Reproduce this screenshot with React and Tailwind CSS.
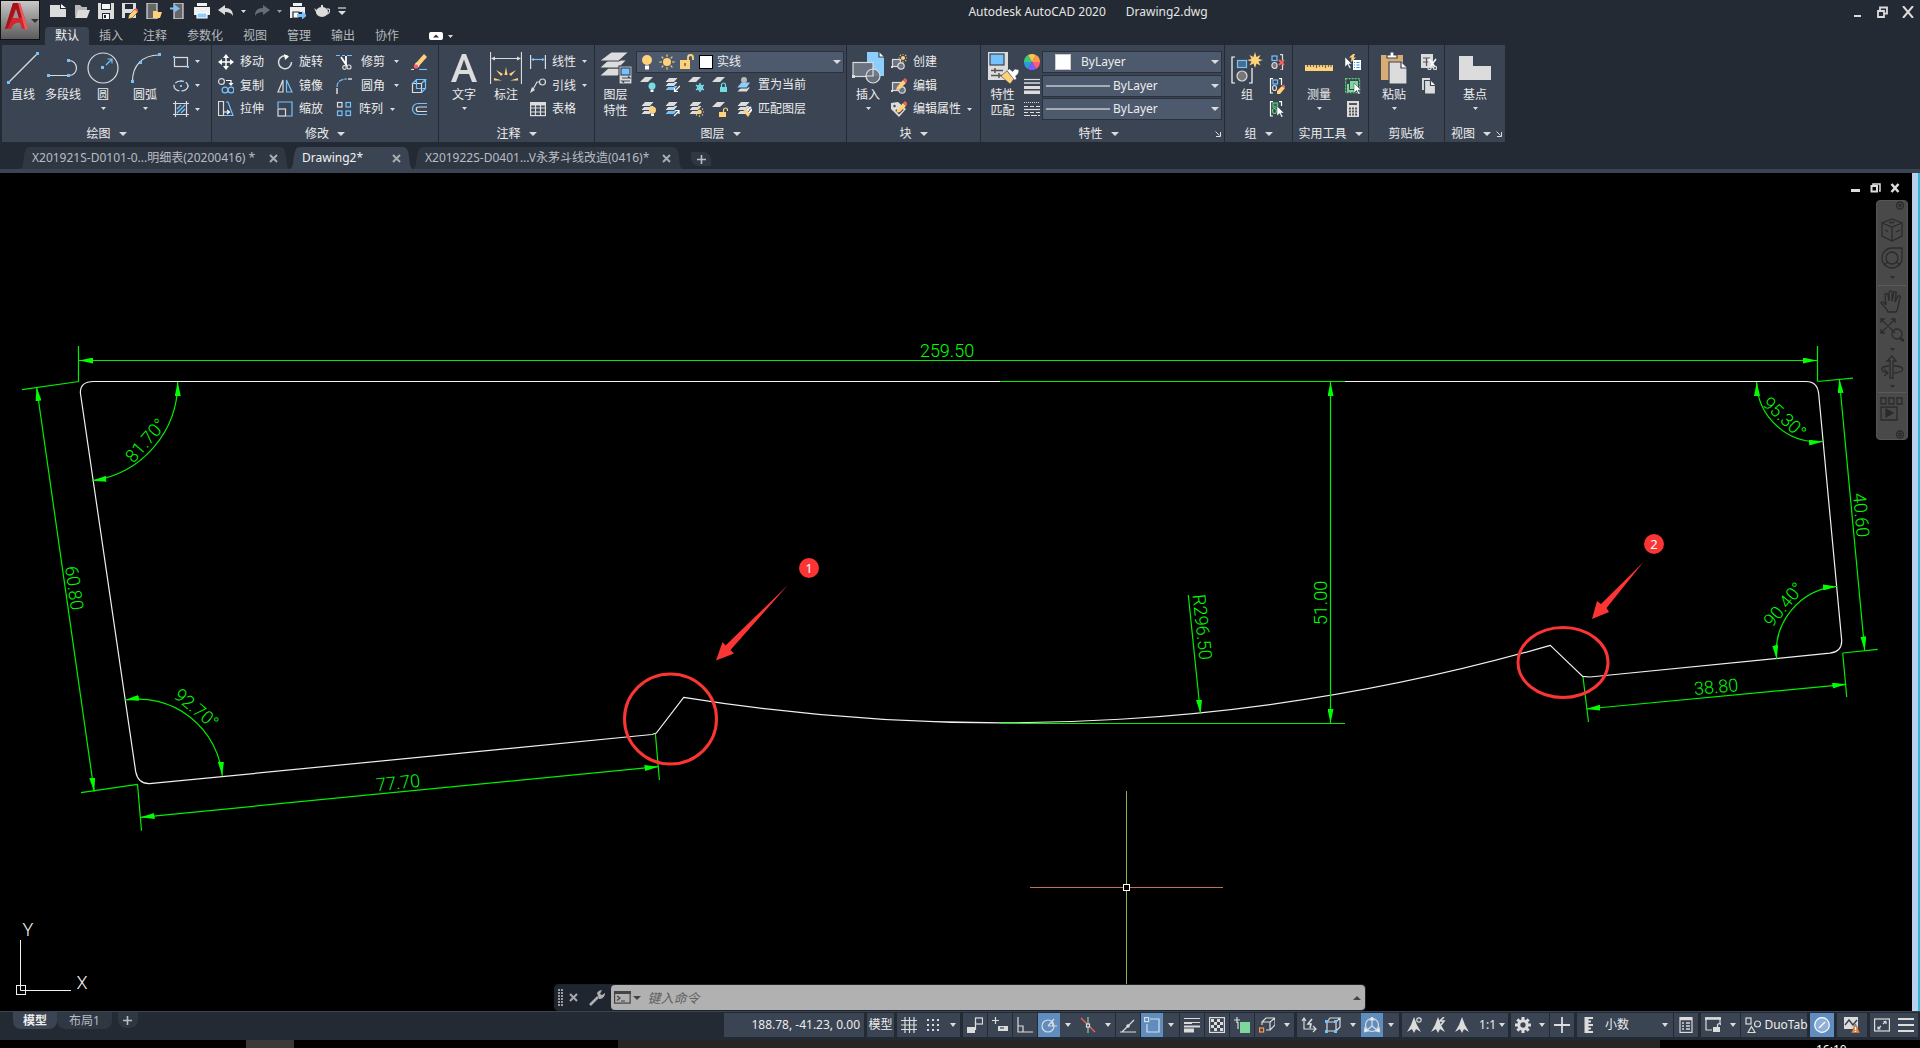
import React from "react";

const W = "#dcdcdc";
const B = "#74c3ff";
const Y = "#ffd27a";
const C = "#74dce6";
const R = "#ff5c5c";
const G = "#7fd89b";
const P = "#3b4453";

/* ---------- drawing helpers for icons ---------- */
function Ico({ w = 16, h = w, children, className = "" }) {
  return (
    <svg width={w} height={h} viewBox={`0 0 ${w} ${h}`} fill="none" stroke={W} strokeWidth="1.2" className={`shrink-0 ${className}`} aria-hidden="true">
      {children}
    </svg>
  );
}
const Dot = ({ x, y, s = 3, c = B }) => <rect x={x} y={y} width={s} height={s} fill={c} stroke="none" />;
const Caret = ({ className = "text-[#dcdcdc]", big }) => (
  <svg width={big ? 8 : 5} height={big ? 4 : 3} viewBox="0 0 8 4" className={`shrink-0 ${className}`} preserveAspectRatio="none" aria-hidden="true">
    <path d="M0 0h8L4 4z" fill="currentColor" />
  </svg>
);
const Sheet = ({ x = 0, y = 0, c = W }) => <path d={`M${x + 5} ${y}h8l-5 5h-8z`} fill={c} stroke="none" />;
const Stack = ({ c1 = W, c2 = W, c3 = W }) => (
  <g stroke={P} strokeWidth="1">
    <path d="M5 8.500h9.500l-4.500 5h-9.500z" fill={c3} />
    <path d="M5 4.500h9.500l-4.500 5h-9.500z" fill={c2} />
    <path d="M5 0.500h9.500l-4.500 5h-9.500z" fill={c1} />
  </g>
);
const Bulb = ({ x, y, c = Y }) => (
  <g stroke="none">
    <circle cx={x} cy={y} r="3.500" fill={c} />
    <rect x={x - 1.5} y={y + 3.5} width="3" height="2.500" fill="#fff" />
  </g>
);
const Lock = ({ x, y, c, open }) => (
  <g>
    <rect x={x} y={y} width="7" height="5" fill={c} stroke="none" />
    <path d={open ? `M${x + 4.5} ${y}v-2a2 2 0 0 1 4 0v1` : `M${x + 1.5} ${y}v-2a2 2 0 0 1 4 0v2`} stroke={c} />
  </g>
);
const Sun = ({ x, y, r = 3, c = Y }) => (
  <g stroke={c}>
    <circle cx={x} cy={y} r={r} fill={c} stroke="none" />
    {[0, 45, 90, 135, 180, 225, 270, 315].map((a) => (
      <path key={a} d={`M${x + r + 1.2} ${y}h${r * 0.6}`} transform={`rotate(${a} ${x} ${y})`} />
    ))}
  </g>
);
const Pencil = () => (
  <g stroke="none">
    <path d="M6 9l6-7 3 3-6 6-4 1z" fill={Y} />
    <path d="M12 2l2-2 2.500 2.500L15 5z" fill={R} />
  </g>
);
const Cursor = ({ x, y }) => <path d={`M${x} ${y}v10l2.500-2.500 2 4 1.500-.8-2-3.700h3z`} fill="#fff" stroke={P} strokeWidth=".5" />;

/* ---------- large ribbon icons ---------- */
const Big = {
  line: <Ico w={32}><path d="M2 30L30 2" /><Dot x={0} y={29} /><Dot x={29} y={0} /></Ico>,
  pline: <Ico w={32}><path d="M2 23.500h20M22 23.500a7 7 0 0 0 0-15" /><Dot x={0} y={22} /><Dot x={20} y={22} /><Dot x={20} y={7} /></Ico>,
  circle: <Ico w={32}><circle cx="16" cy="16" r="15" /><Dot x={14} y={14} /><path d="M19 13l6-6M20.500 7H25v4.500" stroke={B} /></Ico>,
  arc: <Ico w={32}><path d="M3.500 29C3.500 14 13 3 30 3" /><Dot x={2} y={28} /><Dot x={10} y={9} /><Dot x={29} y={1} /></Ico>,
  text: <Ico w={32}><path d="M3 30L14 2h4l11 28h-5l-3-8H11l-3 8zM12.300 18h7.400L16 7.500z" fill={W} stroke="none" /></Ico>,
  dim: (
    <Ico w={32}>
      <path d="M.5 0v32M31.500 0v32M2 6.500h28" />
      <path d="M1 6.500l4-2v4zM31 6.500l-4-2v4z" fill={W} stroke="none" />
      <path d="M14.500 23L16 15l1.500 8zM11 24l-5-6 7 4zM21 24l5-6-7 4zM4 28.500v-2.500l8 2.500zM28 28.500v-2.500l-8 2.500z" fill={Y} stroke="none" />
    </Ico>
  ),
  layers: (
    <Ico w={32}>
      <g fill={W} stroke={P}><path d="M8 16h18l-8 8H-1z" /><path d="M8 8h19l-8 8H-1z" /><path d="M11 0h18l-10 9H-1z" /></g>
      <rect x="19" y="14" width="13" height="18" fill={W} stroke={P} /><rect x="21" y="16" width="9" height="7" fill={B} stroke={P} />
      <path d="M22 26h8l-2-1.500M30 29h-8l2 1.500" stroke={P} />
    </Ico>
  ),
  insert: (
    <Ico w={32}>
      <path d="M15 0h11l6 6v18H15z" fill="#8ccfff" stroke="none" /><path d="M27 0v5h5" fill="#fff" stroke={P} />
      <rect x="1" y="10.500" width="20" height="14" fill="#6b7280" /><Dot x={0} y={23} c={W} /><circle cx="21" cy="24" r="7" fill="#6b7280" fillOpacity=".9" />
      <path d="M21 16v8h-8" />
    </Ico>
  ),
  match: (
    <Ico w={32}>
      <rect x="1" y="0" width="20" height="28" fill={W} stroke="none" /><rect x="3" y="2" width="14" height="11" fill={B} stroke={P} />
      <path d="M4 18.500h12M4 23.500h12M8 16v5M12 21v5" stroke="#555" strokeWidth="1.500" />
      <path d="M14 24l6-5 7 8-4 5z" fill={Y} stroke={P} strokeWidth=".6" />
      <path d="M20 18.500l2.500-1.500 3 2.500L28 17l4 1-1 4-2.500 2 1 3-2 1z" fill="#fff" stroke={P} strokeWidth=".4" />
    </Ico>
  ),
  group: (
    <Ico w={32}>
      <path d="M4 5H1v26h3M18 31h3V16" stroke="#fff" />
      <rect x="6.500" y="8.500" width="9" height="7" fill="#4a6c8c" stroke={B} /><circle cx="11" cy="24" r="5" fill="#777" />
      <path d="M24 0l1.500 5 4-2-2 4 4.500 1-4.500 1.500 2 4-4-2L24 16l-1.500-4.500-4 2 2-4L16 8l4.500-1-2-4 4 2z" fill={Y} stroke="none" />
    </Ico>
  ),
  ruler: <Ico w={32}><rect x="2" y="13" width="28" height="6" fill={Y} stroke="none" /><path d="M4.500 13v2M7.500 13v2M10.500 13v2M13.500 13v3M16.500 13v2M19.500 13v2M22.500 13v3M25.500 13v2M28 13v2" stroke="#665" /></Ico>,
  paste: (
    <Ico w={32}>
      <rect x="3" y="3" width="22" height="25" fill="#d9ac73" stroke="none" /><path d="M9 3h3V0h4v3h3v3H9z" fill="#fff" stroke={P} />
      <path d="M11 10h12l6 6v16H11z" fill={W} stroke={P} /><path d="M23 10v6h6" fill="#fff" stroke={P} />
    </Ico>
  ),
  base: <Ico w={32}><path d="M0 4h14v10h18v14H0z" fill={W} stroke="none" /></Ico>,
};

/* ---------- small ribbon icons ---------- */
const Sm = {
  rect: <Ico><rect x="1.500" y="3.500" width="13" height="9" /><Dot x={0} y={2} s={2} /><Dot x={14} y={12} s={2} /></Ico>,
  ellipse: <Ico><ellipse cx="8" cy="8" rx="7" ry="5" strokeDasharray="9 2" /><Dot x={7} y={7} s={2} /><Dot x={14} y={7} s={2} /><Dot x={7} y={2} s={2} /></Ico>,
  hatch: <Ico><path d="M2.500 0v16M13.500 0v16M0 2.500h16M0 13.500h16" /><path d="M4 8l4-4M4 12l8-8M8 12l4-4" stroke={B} strokeWidth="1.400" /></Ico>,
  move: <Ico><path d="M8 2v12M2 8h12" stroke="#fff" strokeWidth="1.500" /><path d="M8 0l3 4H5zM8 16l3-4H5zM0 8l4-3v6zM16 8l-4-3v6z" fill="#fff" stroke="none" /></Ico>,
  rotate: <Ico><path d="M11 2.500A6.500 6.500 0 1 0 14.500 8" strokeWidth="1.500" /><path d="M7 0l5 2.500L8 6z" fill="#fff" stroke="none" /></Ico>,
  trim: <Ico><path d="M0 1.500h4M6 1.500h3M11 1.500h5" stroke={B} /><path d="M5 3l6 9M10 2v9" stroke="#fff" strokeWidth="1.800" /><circle cx="13" cy="13" r="2" /><circle cx="8.500" cy="13.500" r="1.800" /></Ico>,
  erase: <Ico><path d="M5 9l8-9 3 3-8 9z" fill={Y} stroke="none" /><path d="M5 8.500L8.500 12 6.500 14 3.500 11z" fill="#fff" stroke="none" /><circle cx="5" cy="12.500" r="2.200" fill={R} stroke="none" /><path d="M0 15.500h3" /><path d="M8 15.500h8" stroke={B} /></Ico>,
  copy: <Ico><circle cx="3.500" cy="3.500" r="2.900" /><circle cx="7" cy="12" r="2.900" stroke={B} /><circle cx="13" cy="12" r="2.900" stroke={B} /><path d="M8 2.500h5V6" stroke="#fff" /><path d="M10.500 5h5L13 8z" fill="#fff" stroke="none" /></Ico>,
  mirror: <Ico><path d="M6 2v12H1z" /><path d="M9.500 2v12H15z" stroke={B} /></Ico>,
  fillet: <Ico><path d="M1 16v-6M12 1h4" strokeWidth="1.500" /><path d="M1 9c0-5 3-8 10-8" stroke={B} strokeDasharray="5 1" /></Ico>,
  box: <Ico><path d="M1.500 5.500h9v9h-9z" /><path d="M1.500 5.500l4-4h9l-4 4M14.500 1.500v9l-4 4M5.500 1.500v9h9" stroke={B} /></Ico>,
  stretch: <Ico><path d="M.5.500h5v14h-5z" /><path d="M8 1h2l5 13.500H6" stroke={B} /><path d="M5 11h6M9 9l2.500 2L9 13" stroke="#fff" /></Ico>,
  scale: <Ico><path d="M1 7V1h14v14H9" stroke={B} /><rect x="1" y="8" width="7.500" height="7" /></Ico>,
  array: <Ico><rect x="1.500" y="1.500" width="4.500" height="4.500" /><g stroke={B}><rect x="10" y="1.500" width="4.500" height="4.500" /><rect x="1.500" y="10" width="4.500" height="4.500" /><rect x="10" y="10" width="4.500" height="4.500" /></g></Ico>,
  offset: <Ico><path d="M16 2.500H7a5.500 5.500 0 0 0 0 11h9" stroke={B} /><path d="M16 6H7.500a2.200 2.200 0 0 0 0 4.500H16" /></Ico>,
  linear: <Ico><path d="M.6 1v14M15.400 1v14" /><path d="M2 5.500h12" stroke={B} /><path d="M1 5.500L4 4v3zM15 5.500L12 4v3z" fill={B} stroke="none" /></Ico>,
  leader: <Ico><circle cx="12.500" cy="4" r="3" /><path d="M9.500 4H7L2 13" /><path d="M0 15l2-6 3 3z" fill={W} stroke="none" /></Ico>,
  table: <Ico><rect x=".6" y="1.600" width="14.800" height="13" /><path d="M0 3h16" strokeWidth="3" /><path d="M0 7h16M0 11h16M5.500 4v11M10.500 4v11" /></Ico>,
  lOff: <Ico><Sheet /><Bulb x={12} y={9} c={C} /></Ico>,
  lIso: <Ico><Stack c3={B} /><path d="M16 9l-5 5M10.500 11v3.500H14" stroke="#fff" /></Ico>,
  lFrz: <Ico><Sheet /><path d="M12 6v9M8 8.200l8 4.600M16 8.200l-8 4.600" stroke={C} strokeWidth="1.500" /><circle cx="12" cy="10.500" r="2.500" stroke={C} /></Ico>,
  lLock: <Ico><Sheet /><Lock x={8} y={10} c={C} /></Ico>,
  lCur: <Ico><g stroke={P}><path d="M5 10h10l-4 5H0z" fill={W} /><path d="M5 5h10l-4 6H0z" fill="#8ccfff" /></g><circle cx="8" cy="3" r="3" fill="#b8b8b8" stroke="none" /></Ico>,
  lOn: <Ico><Stack /><Bulb x={12.5} y={9} /></Ico>,
  lUniso: <Ico><Stack c3={B} /><path d="M10 15l5-5M11.500 9.500H15V13" stroke="#fff" /></Ico>,
  lThaw: <Ico><Stack /><Sun x={11.5} y={11} r={2.3} /></Ico>,
  lUnlock: <Ico><Sheet y={1} /><Lock x={7} y={11} c={Y} open /></Ico>,
  lMatch: <Ico><Stack /><path d="M7 10l3-2 4 5-2 3z" fill={Y} stroke="none" /><path d="M11 9l4-3M13 12l3-4" stroke="#fff" strokeWidth="2" /></Ico>,
  create: <Ico><rect x="1.500" y="5.500" width="8" height="7" fill="#6b7280" /><circle cx="10" cy="12" r="3.200" fill="#6b7280" /><Dot x={0} y={12} s={2} c={W} /><Sun x={12} y={4} r={2} /></Ico>,
  edit: <Ico><rect x="1.500" y="4.500" width="8" height="8" fill="#6b7280" /><circle cx="11" cy="12" r="3.200" fill="#6b7280" /><Dot x={0} y={12} s={2} c={W} /><Pencil /></Ico>,
  attr: <Ico><path d="M0 2l7-1 8 7-7 8-8-8z" fill={W} stroke="none" /><circle cx="3.500" cy="5" r="1.200" fill={P} stroke="none" /><path d="M5 9l3 3 4-4" stroke={P} strokeWidth="2" /><Pencil /></Ico>,
  wheel: (
    <Ico>
      {["#ff9a4d", "#ff5c7a", "#7a5cff", "#2e9bd6", "#3cc77e", "#f5c84c"].map((c, i) => (
        <path key={c} d="M8 8L8 0A8 8 0 0 1 14.930 4z" fill={c} stroke="none" transform={`rotate(${i * 60 + 30} 8 8)`} />
      ))}
    </Ico>
  ),
  weights: <Ico><path d="M0 1.500h16" /><path d="M0 5h16" strokeWidth="1.500" /><path d="M0 9.500h16" strokeWidth="3" /><path d="M0 14.500h16" strokeWidth="4" /></Ico>,
  types: <Ico><path d="M0 1.500h16" strokeDasharray="1 1" /><path d="M0 5.500h16" strokeDasharray="4 2" /><path d="M0 8.500h16" /><path d="M0 11.500h16" strokeDasharray="4 2" /><path d="M0 14.500h16" strokeDasharray="6 1" /></Ico>,
  ungroup: <Ico><path d="M11 .600h2.500V16H11" /><rect x="3" y="2" width="5" height="4.500" stroke={B} /><ellipse cx="5.500" cy="11.500" rx="2.600" ry="3" fill="#777" /><path d="M10 6l5 5M15 6l-5 5" stroke={R} strokeWidth="1.800" /></Ico>,
  gedit: <Ico><path d="M4 .6H1.500V15H4M10 .6h2.500V7" stroke="#fff" /><rect x="4" y="2" width="4.500" height="4" stroke={B} /><ellipse cx="5.500" cy="10" rx="2" ry="2.500" /><path d="M8 13l5-5 3 2-5 6H8z" fill={Y} stroke="none" /><path d="M13 8l1.500-1.500L17 9l-1.500 1.500z" fill={R} stroke="none" /></Ico>,
  gsel: <Ico><path d="M4 .6H1.500V15H4M10 .6h2.500V5" stroke="#fff" /><rect x="4" y="2" width="4.500" height="4" stroke="#5ecb7d" fill="#2f6e47" /><ellipse cx="5.500" cy="10" rx="2" ry="2.500" stroke="#5ecb7d" /><Cursor x={8} y={5} /></Ico>,
  quick: <Ico><rect x="8" y="6" width="8" height="10" fill="#fff" stroke="none" /><path d="M11.500 8.500h3M11.500 11h3M11.500 13.500h3M9 8.500h1M9 11h1M9 13.500h1" stroke="#2e8fe0" /><Cursor x={0} y={3} /><path d="M8 0L4 3.500h2.500L6 8l5-4.500H8.500L10 0z" fill={Y} stroke="none" /></Ico>,
  selall: <Ico><rect x=".6" y=".6" width="14" height="14" stroke="#5ecb7d" strokeDasharray="2 1" /><rect x="5" y="3" width="8" height="8" fill={G} stroke="none" /><path d="M3 6v7h7" stroke={G} strokeWidth="2" /><Cursor x={9} y={5} /></Ico>,
  calc: <Ico><rect x="2" y="0" width="12" height="16" fill={W} stroke="none" /><path d="M4 3h8" stroke="#555" strokeWidth="2" /><path d="M4 7.500h8M4 10.500h8M4 13.500h8" stroke="#555" strokeWidth="1.800" strokeDasharray="2 1" /></Ico>,
  cut: <Ico><rect x="0" y="0" width="12" height="14" fill={W} stroke="none" /><path d="M2 4h7M2 8h5M5.500 4v8" stroke="#555" /><path d="M8 5l6 8M15 5l-6 8" stroke="#fff" strokeWidth="1.500" /><circle cx="8.500" cy="14" r="1.600" /><circle cx="14" cy="14" r="1.600" /></Ico>,
  copyc: <Ico><path d="M1 0h8v12H1z" fill={W} stroke="none" /><path d="M3.500 2.500h6l5 5v8.500h-11z" fill={W} stroke={P} /><path d="M9.500 2.500v5h5" fill="#fff" stroke={P} /></Ico>,
};

/* ---------- ribbon building blocks ---------- */
function Panel({ title, className, caret = true, launcher, children }) {
  return (
    <section aria-label={title} className={`flex shrink-0 flex-col bg-[#3b4453] ${className}`}>
      <div className="flex h-[76px] pt-[5px]">{children}</div>
      <div className="relative flex h-[21px] items-center justify-center pt-1 leading-4">
        <span className={`flex items-center gap-2 whitespace-nowrap ${launcher ? "pr-2" : ""}`}>
          <span>{title}</span>
          {caret && <Caret big />}
        </span>
        {launcher && (
          <button aria-label={`${title}设置`} className="absolute right-[3px] bottom-[5px]">
            <svg width="6" height="6" viewBox="0 0 6 6" fill="none" stroke={W}><path d="M.5.500l4 4M5.500 1v4.500H1" /></svg>
          </button>
        )}
      </div>
    </section>
  );
}
function BigBtn({ icon, label, label2, caret, className = "w-10" }) {
  return (
    <button className={`flex shrink-0 flex-col items-center pt-[2px] ${className}`}>
      {icon}
      <span className="pt-[3px] leading-4">{label}</span>
      {label2 && <span className="leading-4">{label2}</span>}
      {caret && <Caret className="mt-1 text-[#dcdcdc]" />}
    </button>
  );
}
function Row({ icon, label, caret, className = "" }) {
  return (
    <button aria-label={label ? undefined : "工具"} className={`flex h-6 items-center gap-[6px] whitespace-nowrap ${className}`}>
      {icon}
      {label && <span>{label}</span>}
      {caret && <Caret />}
    </button>
  );
}
const Col = ({ className = "", children }) => <div className={`flex shrink-0 flex-col ${className}`}>{children}</div>;

function Picker({ label, value, lead, className = "", selectClass = "" }) {
  return (
    <div className={`flex h-[22px] items-center border border-[#2a313c] bg-[#4d5a6e] pr-[2px] ${className}`}>
      {lead}
      <select aria-label={label} className={`min-w-0 flex-1 appearance-none bg-transparent leading-5 outline-none ${selectClass}`}>
        <option>{value}</option>
      </select>
      <Caret big />
    </div>
  );
}

/* ---------- header ---------- */
const qat = [
  ["新建", <Ico key="i"><path d="M0 2h10v4h6v8H0z" fill={W} stroke="none" /><path d="M11 1l5 4h-5z" fill="#fff" stroke="none" /></Ico>],
  ["打开", <Ico key="i"><path d="M1 14V2h5l2 2h5v3H5z" fill="#b8b8b8" stroke="none" /><path d="M4 7h12l-3 8H1z" fill={W} stroke="none" /></Ico>],
  ["保存", <Ico key="i"><path d="M0 0h16v16H0z" fill={W} stroke="none" /><path d="M3 0h10v7H3zM4 10h8v6H4z" fill="#232a33" stroke="none" /><path d="M4 1h8v5H4zM5 11h6v5H5z" fill="#f5f5f5" stroke="none" /><path d="M6 12h2v3H6z" fill="#232a33" stroke="none" /></Ico>],
  ["另存为", <Ico key="i"><path d="M0 0h14v15H0z" fill={W} stroke="none" /><path d="M3 1h8v5H3zM3 10h7v5H3z" fill="#232a33" stroke="none" /><path d="M7 12l6-6 3 3-6 6-4 1z" fill={Y} stroke="#232a33" strokeWidth=".5" /><path d="M12.500 6.500L14 5l3 3-1.500 1.500z" fill={R} stroke="none" /></Ico>],
  ["从移动设备打开", <Ico key="i"><rect x="1" y="0" width="10" height="16" fill="#666" stroke={W} /><path d="M7 8h4l1 1h4l-2 6H7z" fill={Y} stroke="none" /></Ico>],
  ["保存到移动设备", <Ico key="i"><rect x="4" y="0" width="9" height="16" fill="#666" stroke={W} /><path d="M0 5.500h6" stroke={B} strokeWidth="2" /><path d="M5 2l5 3.500L5 9z" fill={B} stroke="none" /></Ico>],
  ["打印", <Ico key="i"><path d="M3 0h10v3H3zM0 4h16v8h-3v-2H3v2H0z" fill="#f0f0f0" stroke="none" /><path d="M3 10h10v5H3z" fill="#8ccfff" stroke="#fff" /></Ico>],
];
const menus = ["默认", "插入", "注释", "参数化", "视图", "管理", "输出", "协作"];

function Header() {
  return (
    <header className="flex h-[45px]">
      <button aria-label="应用程序菜单" className="flex h-10 w-10 shrink-0 items-start gap-[3px] border border-[#111] bg-linear-to-b from-[#c8c8c8] to-[#5c5c5c] pt-[2px] pl-1">
        <svg width="23" height="27" viewBox="0 0 23 27">
          <path d="M0 26L8 0h7l8 26h-6l-2-6c-4-1-8 2-9 6z" fill="#d3262e" />
          <path d="M11 6l3 9H8z" fill="#999" />
          <path d="M8 0L0 26l3-1L11 5l3 10 3-1L13 0z" fill="#a3151c" />
          <path d="M13 0h2l8 26h-3z" fill="#ef5a5a" />
        </svg>
        <Caret big className="mt-4 text-[#333]" />
      </button>
      <div className="flex min-w-0 flex-1 flex-col">
        <div className="grid h-[27px] grid-cols-[1fr_auto_1fr] items-start">
          <div className="flex h-[22px] items-center gap-2 pl-[10px]">
            {qat.map(([n, i]) => <button key={n} aria-label={n}>{i}</button>)}
            <button aria-label="放弃" className="flex items-center gap-[7px]">
              <Ico><path d="M0 7l7-5v3c6 0 8 3 8 8-2-3-4-4-8-4v3z" fill={W} stroke="none" /></Ico><Caret />
            </button>
            <button aria-label="重做" className="flex items-center gap-[7px]">
              <Ico><path d="M16 7L9 2v3c-6 0-8 3-8 8 2-3 4-4 8-4v3z" fill="#666d76" stroke="none" /></Ico><Caret className="text-[#9a9fa6]" />
            </button>
            <button aria-label="批处理打印"><Ico><path d="M3 0h9v3H3zM0 4h15v7h-3V9H3v6H0z" fill="#f0f0f0" stroke="none" /><path d="M3 9h6v6H3z" fill="#fff" stroke="#232a33" /><path d="M7 11h5V8l5 4.500-5 4V14H7z" fill={B} stroke="none" /></Ico></button>
            <button aria-label="渲染"><Ico><ellipse cx="8" cy="9" rx="6" ry="5" fill={W} stroke="none" /><path d="M0 5l4 3-1 3zM7 2h2v3H7z" fill={W} stroke="none" /><path d="M13 6c4-1 3 4 0 5" /></Ico></button>
            <button aria-label="自定义快速访问工具栏"><Ico w={8} h={8}><path d="M0 1h8" /><path d="M0 4h8L4 8z" fill={W} stroke="none" /></Ico></button>
          </div>
          <h1 className="flex h-6 items-center gap-5 pl-[216px] text-[#e6e6e6]"><span>Autodesk AutoCAD 2020</span><span>Drawing2.dwg</span></h1>
          <div className="flex h-6 items-center justify-end gap-[14px] pr-[6px]">
            <button aria-label="最小化"><Ico w={10} h={12}><path d="M1 10h7" strokeWidth="2" /></Ico></button>
            <button aria-label="还原"><Ico w={11} h={12}><path d="M3 4V1.500h7v6H8" strokeWidth="1.800" /><path d="M1 5h6v6H1z" strokeWidth="1.800" /></Ico></button>
            <button aria-label="关闭"><Ico w={12} h={12}><path d="M1 0l10 12M11 0L1 12" strokeWidth="2" /></Ico></button>
          </div>
        </div>
        <nav className="flex h-[18px] items-stretch pl-[5px]">
          {menus.map((m, i) => (
            <button key={m} className={i === 0 ? "rounded-t-sm bg-[#3b4453] px-[10px] leading-[18px] text-[#f2f2f2]" : "px-[10px] leading-[18px] text-[#b4b8be]"}>{m}</button>
          ))}
          <button aria-label="最小化功能区" className="ml-5 flex items-center gap-[5px]">
            <Ico w={14} h={8}><rect width="14" height="8" rx="2" fill="#fff" stroke="none" /><path d="M4 5.500h6L7 2.500z" fill="#333" stroke="none" /></Ico>
            <Caret />
          </button>
        </nav>
      </div>
    </header>
  );
}

/* ---------- ribbon ---------- */
const lineSample = <svg width="64" height="2" className="mx-[3px] shrink-0"><path d="M0 1h64" stroke="#fff" /></svg>;

function Ribbon() {
  return (
    <div className="flex gap-px pb-[5px] pl-[2px] text-[#ececec]">
      <Panel title="绘图" className="w-[209px]">
        <BigBtn icon={Big.line} label="直线" className="ml-[1px] w-10" />
        <BigBtn icon={Big.pline} label="多段线" />
        <BigBtn icon={Big.circle} label="圆" caret />
        <BigBtn icon={Big.arc} label="圆弧" caret className="w-11" />
        <Col className="pl-[6px]">
          <Row icon={Sm.rect} caret /><Row icon={Sm.ellipse} caret /><Row icon={Sm.hatch} caret />
        </Col>
      </Panel>
      <Panel title="修改" className="w-[226px]">
        <Col className="w-[65px] pl-[6px]"><Row icon={Sm.move} label="移动" /><Row icon={Sm.copy} label="复制" /><Row icon={Sm.stretch} label="拉伸" /></Col>
        <Col className="w-[59px]"><Row icon={Sm.rotate} label="旋转" /><Row icon={Sm.mirror} label="镜像" /><Row icon={Sm.scale} label="缩放" /></Col>
        <Col className="w-[75px]"><Row icon={Sm.trim} label="修剪" caret className="justify-between pr-3" /><Row icon={Sm.fillet} label="圆角" caret className="justify-between pr-3" /><Row icon={Sm.array} label="阵列" caret className="justify-between pr-4" /></Col>
        <Col><Row icon={Sm.erase} /><Row icon={Sm.box} /><Row icon={Sm.offset} /></Col>
      </Panel>
      <Panel title="注释" className="w-[155px]">
        <BigBtn icon={Big.text} label="文字" caret className="ml-[3px] w-11" />
        <BigBtn icon={Big.dim} label="标注" />
        <Col className="gap-0 pl-1"><Row icon={Sm.linear} label="线性" caret /><Row icon={Sm.leader} label="引线" caret /><Row icon={Sm.table} label="表格" /></Col>
      </Panel>
      <Panel title="图层" className="w-[251px]">
        <BigBtn icon={Big.layers} label="图层" label2="特性" className="w-[41px]" />
        <Col className="flex-1 pr-[2px]">
          <div className="flex h-6 items-center">
            <Picker label="图层" value="实线" className="flex-1 pl-[2px]" selectClass="pl-1" lead={
              <span className="flex items-center gap-1">
                <Ico><circle cx="8" cy="6" r="5" fill={Y} stroke="none" /><path d="M8 11.500v4" stroke="#fff" strokeWidth="4" /></Ico>
                <Ico><Sun x={8} y={8} r={4} /></Ico>
                <Ico><rect x="1" y="6" width="10" height="9" fill={Y} stroke="none" /><path d="M9 6V3.500a2.500 2.500 0 0 1 5 0V6" stroke={Y} strokeWidth="1.800" /><path d="M6 9v3" stroke={P} /></Ico>
                <span className="block size-[14px] border border-black bg-white" />
              </span>} />
          </div>
          <div className="flex h-6 items-center gap-2 pl-1">{[Sm.lOff, Sm.lIso, Sm.lFrz, Sm.lLock].map((x, i) => <button key={i} aria-label="图层工具">{x}</button>)}<Row icon={Sm.lCur} label="置为当前" /></div>
          <div className="flex h-6 items-center gap-2 pl-1">{[Sm.lOn, Sm.lUniso, Sm.lThaw, Sm.lUnlock].map((x, i) => <button key={i} aria-label="图层工具">{x}</button>)}<Row icon={Sm.lMatch} label="匹配图层" /></div>
        </Col>
      </Panel>
      <Panel title="块" className="w-[133px]">
        <BigBtn icon={Big.insert} label="插入" caret className="w-[42px]" />
        <Col className="pl-[2px]"><Row icon={Sm.create} label="创建" /><Row icon={Sm.edit} label="编辑" /><Row icon={Sm.attr} label="编辑属性" caret /></Col>
      </Panel>
      <Panel title="特性" className="w-[243px]" launcher>
        <BigBtn icon={Big.match} label="特性" label2="匹配" className="w-[43px]" />
        <Col><Row icon={Sm.wheel} /><Row icon={Sm.weights} /><Row icon={Sm.types} /></Col>
        <Col className="flex-1 pr-[2px] pl-[2px]">
          <div className="flex h-6 items-center"><Picker className="flex-1" label="颜色" value="ByLayer" selectClass="pl-[10px]" lead={<span className="ml-3 block size-4 border border-[#ccc] bg-white" />} /></div>
          <div className="flex h-6 items-center"><Picker className="flex-1" label="线宽" value="ByLayer" lead={lineSample} /></div>
          <div className="flex h-6 items-center"><Picker className="flex-1" label="线型" value="ByLayer" lead={lineSample} /></div>
        </Col>
      </Panel>
      <Panel title="组" className="w-[67px]">
        <BigBtn icon={Big.group} label="组" className="w-11" />
        <Col><Row icon={Sm.ungroup} /><Row icon={Sm.gedit} /><Row icon={Sm.gsel} /></Col>
      </Panel>
      <Panel title="实用工具" className="w-[75px]">
        <BigBtn icon={Big.ruler} label="测量" caret className="w-[52px]" />
        <Col><Row icon={Sm.quick} /><Row icon={Sm.selall} /><Row icon={Sm.calc} /></Col>
      </Panel>
      <Panel title="剪贴板" className="w-[75px]" caret={false}>
        <BigBtn icon={Big.paste} label="粘贴" caret className="w-[50px]" />
        <Col className="pl-[2px]"><Row icon={Sm.cut} /><Row icon={Sm.copyc} /></Col>
      </Panel>
      <Panel title="视图" className="w-[60px]" launcher>
        <BigBtn icon={Big.base} label="基点" caret className="w-[60px]" />
      </Panel>
    </div>
  );
}

/* ---------- file tabs ---------- */
const Cross = ({ c = "#a8abb0" }) => <svg width="9" height="9" viewBox="0 0 9 9" aria-hidden="true"><path d="M1 1l7 7M8 1L1 8" stroke={c} strokeWidth="2" /></svg>;

function FileTab({ name, active, className }) {
  return (
    <div className={`flex items-stretch ${active ? "text-[#3b4453]" : "text-[#2f3743]"} ${className}`}>
      <svg width="10" height="22" viewBox="0 0 10 22" className="shrink-0"><path d="M0 22C6 20 1 0 10 0v22z" fill="currentColor" /></svg>
      <div className="flex min-w-0 flex-1 items-center justify-between bg-current">
        <button role="tab" aria-selected={!!active} className={active ? "pl-[2px] whitespace-nowrap text-[#f2f2f2]" : "pl-[2px] whitespace-nowrap text-[#b9bdc3]"}>{name}</button>
        <button aria-label="关闭标签" className="pr-[2px]"><Cross /></button>
      </div>
      <svg width="10" height="22" viewBox="0 0 10 22" className="shrink-0"><path d="M10 22C4 20 9 0 0 0v22z" fill="currentColor" /></svg>
    </div>
  );
}
function FileTabs() {
  return (
    <div role="tablist" className="flex h-[26px] items-stretch border-b-4 border-[#3b4453] pl-5">
      <FileTab name="X201921S-D0101-0...明细表(20200416) *" className="w-[270px]" />
      <FileTab name="Drawing2*" active className="w-[123px]" />
      <FileTab name="X201922S-D0401...V永茅斗线改造(0416)*" className="w-[270px]" />
      <button aria-label="新图形" className="mt-[5px] ml-2 flex h-[14px] w-5 items-center justify-center rounded-tr-lg rounded-bl-lg bg-[#2f3743]">
        <svg width="9" height="9" viewBox="0 0 9 9"><path d="M4.500 0v9M0 4.500h9" stroke="#b9bdc3" strokeWidth="1.600" /></svg>
      </button>
    </div>
  );
}

/* ---------- model space ---------- */
const dims = [
  { t: "259.50", x: 947, y: 350, r: 0 },
  { t: "60.80", x: 75, y: 588, r: 82 },
  { t: "81.70°", x: 145, y: 440, r: -49 },
  { t: "92.70°", x: 197, y: 708, r: 40 },
  { t: "77.70", x: 398, y: 782, r: -6 },
  { t: "51.00", x: 1320, y: 603, r: -90 },
  { t: "R296.50", x: 1203, y: 627, r: 84 },
  { t: "38.80", x: 1716, y: 686, r: -5 },
  { t: "40.60", x: 1862, y: 515, r: 85 },
  { t: "95.30°", x: 1785, y: 417, r: 43 },
  { t: "90.40°", x: 1783, y: 604, r: -50 },
];
const dimLines = [
  "M79 360.500H1817", "M36.600 387L94.200 791.700", "M140.600 817.300L658.500 766.700", "M1330.500 382V723",
  "M1586.300 709L1846.300 684.300", "M1839.300 379L1864.700 650.400",
  "M177.700 382A99 99 0 0 1 92.400 480.700", "M125 700A85 85 0 0 1 222.300 775.700",
  "M1756.700 382A61 61 0 0 0 1823 441.400", "M1776.700 659.300A66 66 0 0 1 1837 586.400",
];
const extLines = "M78.500 346V381M1817.500 346V381M22 389.700L79 381.500M81 792.700L137.500 784.300M137.500 784.300L141.500 830.700M655.400 734L659.400 780M1000 723.500H1345M1583 677L1588.500 722M1842.700 653L1846.700 697M1817.500 381.500L1853 378.200M1842.700 653L1877.700 649.300";

function Drawing() {
  return (
    <svg viewBox="0 173 1912 838" className="block w-full" fill="none" role="img" aria-label="Drawing2">
      <defs>
        <marker id="arrow" viewBox="0 0 14 6" refX="14" refY="3" markerWidth="14" markerHeight="6" markerUnits="userSpaceOnUse" orient="auto-start-reverse">
          <path d="M0 0L14 3L0 6z" fill="#00ff00" />
        </marker>
      </defs>
      <path stroke="#f0f0f0" strokeWidth="1.200" d="M93.700 381.500H1806Q1817.500 381.500 1818.700 394L1841.700 640.400Q1842 651.500 1830 653.200L1590 677L1582.700 676.400L1550.300 645.400A1987 1987 0 0 1 683.700 697.300L656.300 733L652 734.500L149.500 783.700Q138 784 135.700 771.700L80.400 393Q80 381.500 93.700 381.500Z" />
      <g stroke="#00ee00" strokeWidth="1.200">
        <path d={extLines} />
        <path d="M1000 381.500H1345" />
        {dimLines.map((d) => <path key={d} d={d} markerStart="url(#arrow)" markerEnd="url(#arrow)" />)}
        <path d="M1188.300 595L1200.500 713.700" markerEnd="url(#arrow)" />
      </g>
      <g fill="#00ff00" className="font-['Roboto','Lato',sans-serif] text-[18px] font-light">
        {dims.map((d) => (
          <text key={d.t} transform={`translate(${d.x} ${d.y}) rotate(${d.r})`} y="7" textAnchor="middle">{d.t}</text>
        ))}
      </g>
      <g stroke="#fa3534" strokeWidth="3">
        <ellipse cx="670.500" cy="719" rx="46" ry="45" />
        <ellipse cx="1563" cy="662.500" rx="45" ry="35" />
      </g>
      <g fill="#fa3534">
        <path d="M788 585L730.500 650L734 653.500L716 660.500L722.500 642L725.500 645.500Z" />
        <path d="M1643.500 562L1606.500 608L1609 612L1592 619L1597 601L1601 604Z" />
        <circle cx="809" cy="568" r="10" />
        <circle cx="1654" cy="544" r="10" />
      </g>
      <g fill="#fff" textAnchor="middle" className="text-[13px]">
        <text x="809" y="573">1</text>
        <text x="1654" y="549">2</text>
      </g>
      <path d="M1126.500 791V984" stroke="#8cb84a" />
      <path d="M1030 887.500H1223" stroke="#c0705a" />
      <rect x="1123.500" y="884.500" width="6" height="6" stroke="#fff" fill="#000" />
      <g stroke="#f0f0f0">
        <path d="M20.500 940V990.500H71" />
        <rect x="16.500" y="985.500" width="9" height="9" />
      </g>
      <g fill="#f8f8f8" textAnchor="middle" className="font-['Roboto','Lato',sans-serif] text-[18px] font-light">
        <text x="28" y="936">Y</text>
        <text x="82" y="989">X</text>
      </g>
    </svg>
  );
}

const NavIco = ({ h = 24, children }) => <svg width="24" height={h} viewBox={`0 0 24 ${h}`} fill="none" stroke="#2b2b2b" strokeWidth="1.300" aria-hidden="true">{children}</svg>;
const NavCaret = () => <Caret className="text-[#2b2b2b]" />;

function NavBar() {
  return (
    <div className="absolute top-[27px] right-1 flex h-60 w-8 flex-col items-center rounded border border-[#555] bg-[#494949]">
      <button aria-label="关闭导航栏" className="mr-[2px] self-end"><NavIco h={9}><circle cx="19" cy="4.500" r="3.500" /><path d="M17.500 3l3 3M20.500 3l-3 3" /></NavIco></button>
      <button aria-label="视图立方" className="mt-2"><NavIco><path d="M2 5l10-4 10 4v13l-10 5-10-5zM2 5l10 4 10-4M12 9v14M9 4.500h5M5 12l3 1.500M16 14l4-2" /></NavIco></button>
      <button aria-label="控制盘" className="mt-1 flex flex-col items-center gap-[6px]"><NavIco><path d="M12 2h10v10a10 10 0 1 1-10-10z" /><circle cx="12" cy="12" r="6" /><path d="M4 19l4-3M20 19l-4-3" /></NavIco><NavCaret /></button>
      <div className="mt-[6px] w-7 border-t border-[#5a5a5a]" />
      <button aria-label="平移" className="mt-1"><NavIco><path d="M8 22c-1-3-4-6-7-9 1-2 3-1 5 2L5 5c0-2 2-2 3 0l1 6V2c1-2 3-1 3 0v9l2-9c1-1 3 0 2 2l-1 8 3-6c1-1 3 0 2 2-2 6-1 10-4 14z" /></NavIco></button>
      <button aria-label="缩放" className="mt-1 flex flex-col items-center gap-[6px]"><NavIco><path d="M1 1l14 14M15 1L1 15M1 5V1h4M11 1h4v4M1 11v4h4" /><circle cx="17" cy="16" r="5" /><path d="M20 20l4 3" strokeWidth="2.500" /></NavIco><NavCaret /></button>
      <button aria-label="动态观察" className="mt-1 flex flex-col items-center gap-[6px]"><NavIco><path d="M10 23V6H7l5-5 4 5h-3v17z" /><path d="M8 18C-1 17 0 11 9 11M14 11c11 0 12 6 0 7M4 14l4 4-4 3" /></NavIco><NavCaret /></button>
      <div className="mt-1 w-7 border-t border-[#5a5a5a]" />
      <button aria-label="ShowMotion" className="mt-1"><NavIco><path d="M1 1h5v6H1zM9 1h5v6H9zM17 1h5v6h-5zM1 10h16v13H1z" /><path d="M6 12l7 4-7 4z" fill="#2b2b2b" /></NavIco></button>
      <button aria-label="导航栏选项" className="mt-auto mr-[2px] self-end"><NavIco h={9}><circle cx="19" cy="4.500" r="3.500" /><path d="M17 3.500h4M17 5.500h4" /></NavIco></button>
    </div>
  );
}

function Canvas() {
  return (
    <main className="flex flex-1 bg-black">
      <div className="relative min-w-0 flex-1">
        <Drawing />
        <div className="absolute top-[10px] right-3 flex items-center gap-[9px]">
          <button aria-label="最小化图形"><Ico w={11} h={10}><path d="M1 7.500h9" strokeWidth="3" /></Ico></button>
          <button aria-label="还原图形"><Ico w={11} h={10}><path d="M3 2V1h7v7H9" strokeWidth="1.500" /><rect x="1.500" y="3" width="5.500" height="5.500" strokeWidth="2" /></Ico></button>
          <button aria-label="关闭图形"><Ico w={10} h={10}><path d="M1.500 1l7 8M8.500 1l-7 8" strokeWidth="2.500" /></Ico></button>
        </div>
        <NavBar />
        <div className="absolute bottom-0 left-[29%] flex h-[27px] w-[812px] items-stretch rounded border border-[#1c222b] bg-[#20262f]">
          <button aria-label="移动" className="ml-[3px]"><Ico w={6} h={18}><path d="M1 0v18M4 0v18" stroke="#aaa" strokeDasharray="2 1" strokeWidth="1.800" /></Ico></button>
          <button aria-label="关闭命令行" className="ml-[5px]"><Cross /></button>
          <button aria-label="自定义" className="ml-[11px]"><Ico><path d="M1 15l8-8" stroke="#b0b0b0" strokeWidth="2.500" /><path d="M8 3c2-3 5-3 5-3l-2 4 2 1 3-2c0 4-3 6-6 6z" fill="#b0b0b0" stroke="none" /></Ico></button>
          <label className="ml-[6px] flex flex-1 items-center rounded-sm bg-[#b1b1b1] pr-1 pl-[3px]">
            <Ico w={17} h={13}><rect x=".6" y=".6" width="15.500" height="11.500" stroke="#444" /><path d="M0 1.500h17" stroke="#444" strokeWidth="3" /><path d="M3 5l3 2-3 2.500M7 10h4" stroke="#444" /></Ico>
            <Caret big className="mx-[2px] text-[#444]" />
            <input aria-label="键入命令" placeholder="键入命令" className="min-w-0 flex-1 bg-transparent pl-1 text-[13px] italic outline-none placeholder:text-[#606060]" />
            <Caret big className="rotate-180 text-[#444]" />
          </label>
        </div>
      </div>
      <div className="w-2 shrink-0 border-r-2 border-[#2fb9d8] bg-linear-to-b from-[#b9cfea] to-[#b9d0ee]" />
    </main>
  );
}

/* ---------- status bar ---------- */
const A = <path d="M8 0l3 8 4 7-5-3-2 4-2-4-5 3 4-7z" fill={W} stroke="none" />;
const St = {
  grid: <Ico><path d="M4 0v16M8.500 0v16M13 0v16M0 3.500h16M0 8h16M0 12.500h16" /></Ico>,
  snap: <Ico>{[2, 7, 12].map((x) => [2, 7, 12].map((y) => <Dot key={`${x}-${y}`} x={x} y={y} s={2} c={W} />))}</Ico>,
  infer: <Ico><rect x="8.500" y="1" width="7" height="6" /><path d="M8.500 5v8" /><rect x="0" y="10" width="8" height="6" fill={W} stroke="none" /></Ico>,
  dyn: <Ico><path d="M3.500 0v7M0 3.500h7" /><rect x="6" y="9" width="10" height="5" fill={W} stroke="none" /><path d="M8 11h4" stroke={P} /></Ico>,
  ortho: <Ico><path d="M1 0v15h15M1 9h5v6" /></Ico>,
  polar: <Ico><circle cx="7" cy="9" r="6" /><path d="M7 9L13 2M7 9h9M10 5a5 5 0 0 1 2 4" /></Ico>,
  iso: <Ico><path d="M1 1l14 14" stroke={R} /><path d="M8 0v16" stroke={G} /><rect x="6.500" y="7" width="3" height="3" fill={P} /></Ico>,
  track: <Ico><path d="M0 15h16M2 15L14 3" /><circle cx="8" cy="9" r="1.800" fill={W} stroke="none" /></Ico>,
  osnap: <Ico><path d="M6 2h9v13H3V7" /><rect x=".6" y=".6" width="4" height="4" /></Ico>,
  lwt: <Ico><path d="M0 1.500h16M8 5.500h8" /><path d="M0 6h8M0 9.500h16" strokeWidth="1.800" /><path d="M0 13.500h10" strokeWidth="4" /></Ico>,
  trans: <Ico><rect x=".6" y=".6" width="14.800" height="14.800" />{[2, 5, 8, 11].map((y, j) => [2, 8].map((x) => <Dot key={`${x}-${y}`} x={x + (j % 2) * 3} y={y} c={W} />))}</Ico>,
  cycle: <Ico><rect x="6" y="5" width="10" height="11" fill={G} stroke="none" /><path d="M4 5v7M3 0v6M0 3h6" /></Ico>,
  o3d: <Ico><path d="M3 8V5h8v8H7M3 5l4-4h9v7l-5 5M11 5l5-4" /><rect x=".6" y="11" width="4" height="4" stroke="#ff9a4d" /></Ico>,
  ucs: <Ico><path d="M3 1v11h12M1 4l2-3 2 3M12 9l3 3-3 3" /><path d="M11 2L7 7h3l-1 4" strokeWidth="1.600" /></Ico>,
  filt: <Ico><path d="M2 5h9v9H2zM2 5l3-4h10l-4 4M15 1v9l-4 4" /><Dot x={0} y={3} /><Dot x={9} y={3} /><Dot x={0} y={13} /><Dot x={9} y={13} /></Ico>,
  gizmo: <Ico><circle cx="8" cy="8" r="6.500" /><path d="M8 1v8M8 9l-6 5M8 9l6 5" /><path d="M8 0l2 3H6zM0 15l1-4 3 3zM16 15l-1-4-3 3z" fill="#fff" /></Ico>,
  a1: <Ico>{A}<circle cx="13" cy="3" r="2.200" /></Ico>,
  a2: <Ico>{A}<path d="M14 0l-4 4h4l-3 4" strokeWidth="1.600" /></Ico>,
  a3: <Ico>{A}</Ico>,
  gear: <Ico><circle cx="8" cy="8" r="4.200" strokeWidth="3" />{[0, 45, 90, 135].map((a) => <path key={a} d="M8 0v3M8 13v3" strokeWidth="3" transform={`rotate(${a} 8 8)`} />)}</Ico>,
  plus: <Ico><path d="M8 0v16M0 8h16" strokeWidth="1.800" /></Ico>,
  unit: <Ico><path d="M5.500 0v16" strokeWidth="4" /><path d="M6 1h6M6 4.500h4M6 8h6M6 11.500h4M6 15h6" strokeWidth="1.800" /></Ico>,
  list: <Ico><rect x="2" y=".6" width="12" height="14.800" /><path d="M2 2h12" strokeWidth="2.500" /><path d="M4 6h2M8 6h4M4 9h2M8 9h4M4 12h2M8 12h4" strokeWidth="1.500" /></Ico>,
  lockui: <Ico><path d="M15 7V1H1v12h6" /><path d="M0 1.500h16" strokeWidth="2.500" /><rect x="8" y="10" width="7" height="5" fill={W} stroke="none" /><path d="M12.500 10V8a1.800 1.800 0 0 1 3.500 0" /></Ico>,
  duo: <Ico><rect x="1" y="1" width="5" height="6" /><circle cx="12.500" cy="7" r="3" /><path d="M6.500 9.500l3.500 6H3z" /></Ico>,
  hw: <Ico><circle cx="8" cy="8" r="7.300" fill="#8fb0d6" stroke="#fff" /><path d="M5 11l6-6" stroke="#fff" strokeWidth="1.500" /></Ico>,
  perf: <Ico><rect x="0" y="0" width="14" height="12" fill={W} stroke="none" /><path d="M1 8l4-5 4 5 4-5" stroke={P} strokeWidth="1.500" /><path d="M11.500 7l4.500 9H7z" fill="#f28a3c" stroke={P} strokeWidth=".5" /><path d="M11.500 10v3M11.500 14v1" stroke="#fff" /></Ico>,
  full: <Ico><rect x=".6" y="2" width="14.800" height="12" /><path d="M9 7l3-3M9.500 4.500H12V7M7 9l-3 3M4 9.500V12h2.500" /></Ico>,
  menu: <Ico><path d="M0 2h16M0 8h16M0 14h16" strokeWidth="2" /></Ico>,
};
const statusGroups = [
  [{ i: St.grid, w: "w-6" }, { i: St.snap, w: "w-6" }, { c: 1, w: "w-[15px]" }],
  [{ i: St.infer, w: "w-6" }],
  [{ i: St.dyn, w: "w-6" }],
  [{ i: St.ortho, w: "w-6" }],
  [{ i: St.polar, w: "w-[22px]", on: 1 }, { c: 1, w: "w-4" }, { i: St.iso, w: "w-6" }, { c: 1, w: "w-[15px]" }],
  [{ i: St.track, w: "w-6" }],
  [{ i: St.osnap, w: "w-[22px]", on: 1 }, { c: 1, w: "w-4" }],
  [{ i: St.lwt, w: "w-6" }],
  [{ i: St.trans, w: "w-6" }],
  [{ i: St.cycle, w: "w-6" }],
  [{ i: St.o3d, w: "w-6" }, { c: 1, w: "w-[15px]" }],
  [{ i: St.ucs, w: "w-6" }, { i: St.filt, w: "w-6" }, { c: 1, w: "w-4" }, { i: St.gizmo, w: "w-[22px]", on: 1 }, { c: 1, w: "w-4" }],
  [{ i: St.a1, w: "w-6" }, { i: St.a2, w: "w-6" }, { i: St.a3, w: "w-6" }, { t: "1:1", w: "w-[22px] justify-end" }, { c: 1, w: "w-3" }],
  [{ i: St.gear, w: "w-6" }, { c: 1, w: "w-[14px]" }],
  [{ i: St.plus, w: "w-6" }],
  [{ i: St.unit, w: "w-6" }, { t: "小数", w: "w-14 pl-1 justify-start" }, { c: 1, w: "w-4" }],
  [{ i: St.list, w: "w-6" }],
  [{ i: St.lockui, w: "w-6" }, { c: 1, w: "w-[15px]" }],
  [{ i: St.duo, w: "w-6" }, { t: "DuoTab", w: "w-[42px]" }],
  [{ i: St.hw, w: "w-6", on: 1 }],
  [{ i: St.perf, w: "w-[30px]" }],
  [{ i: St.full, w: "w-6" }, { i: St.menu, w: "w-6" }],
];
const wideGapBefore = new Set([1, 11, 12, 13, 15, 17, 19, 20, 21]);

function StatusBar() {
  return (
    <footer className="flex h-[29px] items-start justify-between border-t border-[#3b4453] pr-[2px] text-[#ececec]">
      <div className="flex pl-[13px] leading-[18px]">
        <button className="h-[17px] rounded-b-lg bg-[#3b4453] px-[10px] font-bold">模型</button>
        <button className="h-[17px] rounded-b-lg bg-[#2f3743] px-3 text-[#b9bdc3]">布局1</button>
        <button aria-label="新建布局" className="ml-[6px] flex h-4 w-5 items-center justify-center rounded-b-lg bg-[#2f3743]"><svg width="9" height="9" viewBox="0 0 9 9"><path d="M4.500 0v9M0 4.500h9" stroke="#b9bdc3" strokeWidth="1.600" /></svg></button>
      </div>
      <div className="flex h-[25px] items-stretch gap-px pt-px">
        <span className="flex w-[140px] items-center justify-end bg-[#3b4453] pr-1">188.78, -41.23, 0.00</span>
        <button className="ml-[2px] w-[27px] bg-[#3b4453] text-center whitespace-nowrap">模型</button>
        <span className="w-px" />
        {statusGroups.map((g, gi) => (
          <div key={gi} className={wideGapBefore.has(gi) ? "ml-[2px] flex bg-[#3b4453]" : "flex bg-[#3b4453]"}>
            {g.map((s, si) => (
              <button key={si} aria-label={s.t ? undefined : "状态选项"} className={`flex items-center whitespace-nowrap ${s.w} ${s.w.includes("justify") ? "" : "justify-center"} ${s.on ? "bg-[#5f8dc0]" : ""}`}>
                {s.i}{s.c && <Caret big className="w-[6px] text-[#dcdcdc]" />}{s.t}
              </button>
            ))}
          </div>
        ))}
      </div>
    </footer>
  );
}

export default function App() {
  return (
    <div className="flex min-h-screen flex-col overflow-hidden bg-[#232a33] font-['Noto_Sans','Noto_Sans_CJK_SC',sans-serif] text-[12px] leading-4">
      <Header />
      <Ribbon />
      <FileTabs />
      <Canvas />
      <StatusBar />
      <div className="flex h-2 overflow-hidden bg-black">
        <div className="w-[246px]" />
        <div className="w-12 bg-[#3a3a3a]" />
        <div className="w-[324px]" />
        <div className="flex-1 bg-[#262626]" />
        <div className="w-[260px] pt-[2px] pl-[156px] text-white">16:10</div>
      </div>
    </div>
  );
}
